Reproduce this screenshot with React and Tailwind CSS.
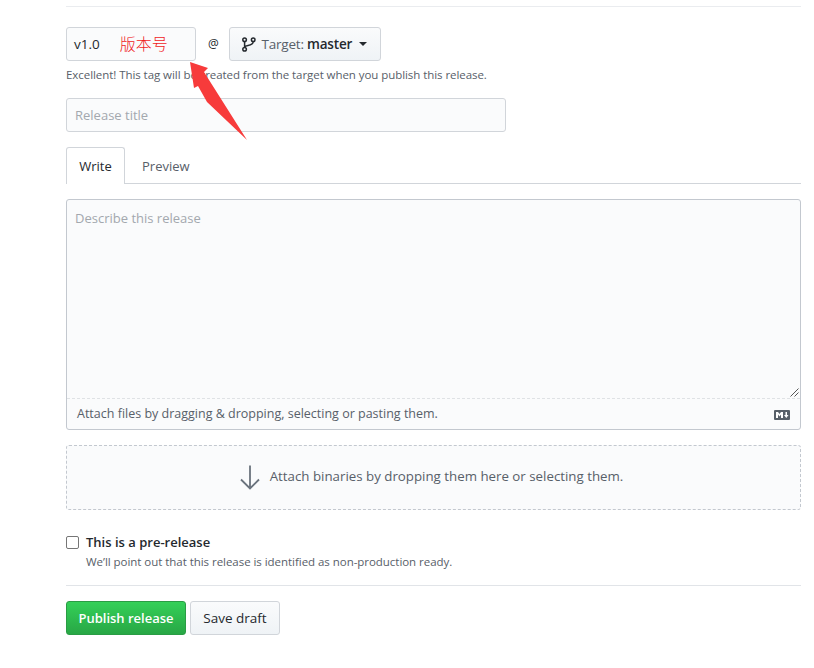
import React from "react";

const GitBranch = () => (
  <svg width="14" height="15" viewBox="0 0 14 15" fill="none" stroke="#24292e" strokeWidth="1.5" className="shrink-0">
    <circle cx="2.6" cy="2.8" r="1.8" />
    <circle cx="11.2" cy="2.8" r="1.8" />
    <circle cx="2.6" cy="12.2" r="1.8" />
    <path d="M2.6 4.6v5.8M11.2 4.6c0 3-3 3.6-5.2 3.9-2 .3-3.4 1-3.4 1.9" />
  </svg>
);

const Markdown = () => (
  <svg width="16" height="10" viewBox="0 0 16 10" className="shrink-0">
    <rect width="16" height="10" rx="1" fill="#586069" />
    <path d="M2 8V2h2l1.5 2L7 2h2v6H7V4.6L5.5 6.5 4 4.6V8zM11.5 2h1.5v3h1.5l-2.2 3-2.3-3h1.5z" fill="#fff" />
  </svg>
);

const DownArrow = () => (
  <svg width="20" height="25" viewBox="0 0 20 25" fill="none" stroke="#6a737d" strokeWidth="1.8" className="shrink-0">
    <path d="M10 0.5V23.5M1 14.5L10 23.5L19 14.5" />
  </svg>
);

export default function App() {
  return (
    <div className="relative h-[668px] w-[814px] overflow-hidden bg-white font-['Open_Sans',sans-serif] text-[14px] text-[#24292e]">
      <div className="ml-[66px] flex w-[735px] flex-col pt-[6px]">
        <div className="h-px bg-[#eaecef]" />

        <div className="mt-[20px] flex items-center">
          <div className="flex h-[34px] w-[130px] items-center rounded-[3px] border border-[#d1d5da] bg-[#fafbfc] pl-[7px] text-[13.5px]">
            <span>v1.0</span>
            <span className="ml-[20px] pb-[3px] font-['Noto_Sans_CJK_SC',sans-serif] text-[16px] font-light text-[#f01c1c]">版本号</span>
          </div>
          <span className="ml-[12px] text-[12px]">@</span>
          <button className="ml-[10px] flex h-[34px] w-[152px] items-center justify-center gap-[5px] rounded-[3px] border border-[#d1d5da] bg-gradient-to-b from-[#fafbfc] to-[#eff3f6] text-[13.5px] text-[#586069]">
            <GitBranch />
            <span className="tracking-[-0.2px]">Target: <b className="font-semibold text-[#24292e]">master</b></span>
            <span className="ml-[2px] h-0 w-0 border-x-[4px] border-t-[4px] border-x-transparent border-t-[#24292e]" />
          </button>
        </div>

        <p className="mt-[5px] text-[11.5px] leading-[18px] tracking-[-0.06px] text-[#586069]">
          Excellent! This tag will be created from the target when you publish this release.
        </p>

        <div className="mt-[14px] flex h-[34px] w-[440px] items-center rounded-[3px] border border-[#d1d5da] bg-[#fafbfc] pl-[8px] pt-px text-[13px] text-[#a3a8ae]">
          Release title
        </div>

        <div className="mt-[15px] flex h-[37px] border-b border-[#d1d5da]">
          <div className="-mb-px flex h-[37px] w-[59px] items-center justify-center rounded-t-[3px] border border-b-0 border-[#d1d5da] bg-white pt-px text-[13px]">Write</div>
          <div className="ml-[17px] flex items-center pt-[3px] text-[13px] text-[#586069]">Preview</div>
        </div>

        <div className="mt-[15px] flex h-[231px] flex-col rounded-[3px] border border-[#c3c8cf] bg-[#fafbfc]">
          <div className="relative flex-1 pl-[8px] pt-[8px] text-[13px] leading-[20px] text-[#a3a8ae]">
            Describe this release
            <svg width="9" height="9" viewBox="0 0 9 9" className="absolute bottom-[1px] right-[1px]" stroke="#555" fill="none">
              <path d="M0.5 8.5L8.5 0.5M4.5 8.5L8.5 4.5" />
            </svg>
          </div>
          <div className="flex h-[31px] items-center justify-between border-t border-dashed border-[#dfe2e5] px-[10px] pt-px text-[12.5px] text-[#586069]">
            <span>Attach files by dragging &amp; dropping, selecting or pasting them.</span>
            <Markdown />
          </div>
        </div>

        <div className="mt-[15px] flex h-[65px] items-center justify-center gap-[10px] rounded-[3px] border border-dashed border-[#c3c8cf] bg-[#fafbfc] pb-px pr-[4px] text-[13.3px] text-[#586069]">
          <DownArrow />
          <span>Attach binaries by dropping them here or selecting them.</span>
        </div>

        <label className="mt-[25px] flex h-[16px] items-center gap-[7px]">
          <span className="-mt-px h-[13px] w-[13px] rounded-[2px] border border-[#767676] bg-white" />
          <span className="text-[13px] font-semibold">This is a pre-release</span>
        </label>
        <p className="ml-[20px] mt-[2px] text-[11.5px] leading-[18px] tracking-[-0.04px] text-[#586069]">
          We’ll point out that this release is identified as non-production ready.
        </p>

        <div className="mt-[14px] h-px bg-[#e1e4e8]" />

        <div className="mt-[15px] flex gap-[4px]">
          <button className="h-[34px] w-[120px] rounded-[3px] border border-[#2a9c44] bg-gradient-to-b from-[#34d058] to-[#28a745] pt-px text-[13px] font-semibold text-white">Publish release</button>
          <button className="h-[34px] w-[90px] rounded-[3px] border border-[#d1d5da] bg-gradient-to-b from-[#fafbfc] to-[#eff3f6] pt-px text-[13.5px] font-medium">Save draft</button>
        </div>
      </div>

      {/* red annotation arrow drawn over the form */}
      <svg width="814" height="668" viewBox="0 0 814 668" className="pointer-events-none absolute left-0 top-0">
        <path d="M190 62L208 68L204 72L247 140L207 102L198 86L194 88Z" fill="#f73b3b" />
      </svg>
    </div>
  );
}
